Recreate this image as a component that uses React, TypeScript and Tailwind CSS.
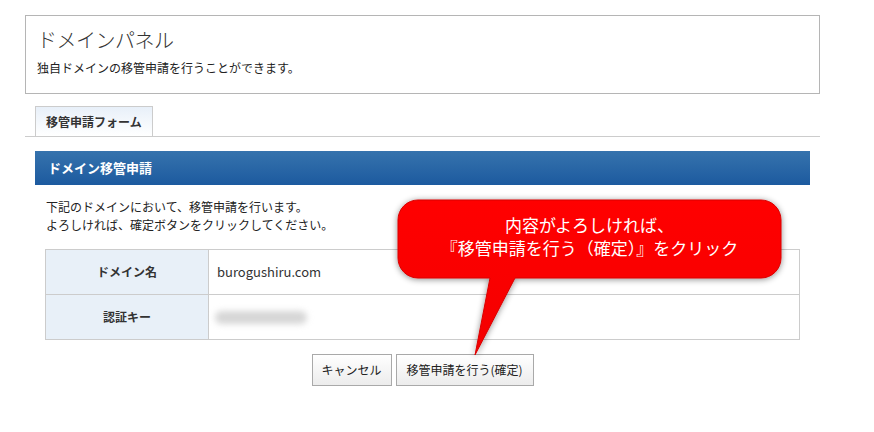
import React from "react";

const FONT = { fontFamily: '"Noto Sans CJK JP", "Noto Sans", sans-serif' };

export default function App() {
  return (
    <div className="relative w-[874px] h-[432px] bg-white text-[#333] overflow-hidden" style={FONT}>
      {/* パネル見出し */}
      <div className="ml-[25px] mt-[15px] w-[795px] h-[79px] border border-[#b5b5b5] pl-[11px] pt-[12px]">
        <h1 className="text-[20px] leading-[24px] font-light text-[#333] tracking-[-0.5px]">ドメインパネル</h1>
        <p className="mt-[8px] text-[12px] leading-[16px] text-[#222]">独自ドメインの移管申請を行うことができます。</p>
      </div>

      {/* タブ */}
      <div className="ml-[25px] mt-[12px] w-[795px] border-b border-[#cccccc] pl-[10px] flex">
        <div className="w-[118px] h-[30px] border border-b-0 border-[#cccccc] bg-gradient-to-b from-[#e8f0f9] to-white flex items-center pl-[10px] text-[12px] font-bold text-[#333]">
          移管申請フォーム
        </div>
      </div>

      {/* 見出しバー */}
      <div className="ml-[35px] mt-[14px] w-[775px] h-[34px] bg-gradient-to-b from-[#3673ad] to-[#1c5a9f] flex items-center pl-[13px] text-[13px] font-bold text-white">
        ドメイン移管申請
      </div>

      <div className="ml-[46px] mt-[13px] text-[12px] leading-[18px] text-[#222]">
        <p>下記のドメインにおいて、移管申請を行います。</p>
        <p>よろしければ、確定ボタンをクリックしてください。</p>
      </div>

      {/* 表 */}
      <table className="ml-[45px] mt-[15px] w-[755px] border-collapse text-[12px]">
        <tbody>
          <tr className="h-[45px]">
            <th className="w-[163px] border border-[#cccccc] bg-[#e8f0f8] font-bold text-[#333]">ドメイン名</th>
            <td className="border border-[#cccccc] pl-[8px] text-[13px] text-[#333]">burogushiru.com</td>
          </tr>
          <tr className="h-[45px]">
            <th className="w-[163px] border border-[#cccccc] bg-[#e8f0f8] font-bold text-[#333]">認証キー</th>
            <td className="border border-[#cccccc] pl-[6px]">
              <div className="w-[92px] h-[13px] rounded-full bg-[#d6d6d6] blur-[3px]" />
            </td>
          </tr>
        </tbody>
      </table>

      {/* ボタン */}
      <div className="ml-[45px] w-[755px] mt-[14px] flex justify-center gap-[4px]">
        <button className="h-[32px] w-[80px] border border-[#a9a9a9] bg-gradient-to-b from-white to-[#ececec] text-[12px] text-[#222]">キャンセル</button>
        <button className="h-[32px] w-[138px] border border-[#a9a9a9] bg-gradient-to-b from-white to-[#ececec] text-[12px] text-[#222]">移管申請を行う(確定)</button>
      </div>

      {/* 吹き出し */}
      <svg className="absolute left-[390px] top-[190px]" width="400" height="175" viewBox="0 0 400 175">
        <defs>
          <linearGradient id="red" x1="0" y1="0" x2="0" y2="1">
            <stop offset="0" stopColor="#ff0000" />
            <stop offset="1" stopColor="#f40000" />
          </linearGradient>
          <filter id="sh" x="-10%" y="-20%" width="120%" height="140%">
            <feDropShadow dx="0" dy="1" stdDeviation="3" floodColor="#000" floodOpacity="0.45" />
          </filter>
        </defs>
        <path
          d="M28,10 H371 A20,20 0 0 1 391,30 V68 A20,20 0 0 1 371,88 H125 L85,165 L100,88 H28 A20,20 0 0 1 8,68 V30 A20,20 0 0 1 28,10 Z"
          fill="url(#red)"
          stroke="#d80000"
          strokeWidth="1"
          filter="url(#sh)"
        />
      </svg>
      <div className="absolute left-[398px] top-[200px] w-[383px] pt-[13px] text-center text-[17px] leading-[23px] text-white">
        <p>内容がよろしければ、</p>
        <p>『移管申請を行う（確定）』をクリック</p>
      </div>
    </div>
  );
}
